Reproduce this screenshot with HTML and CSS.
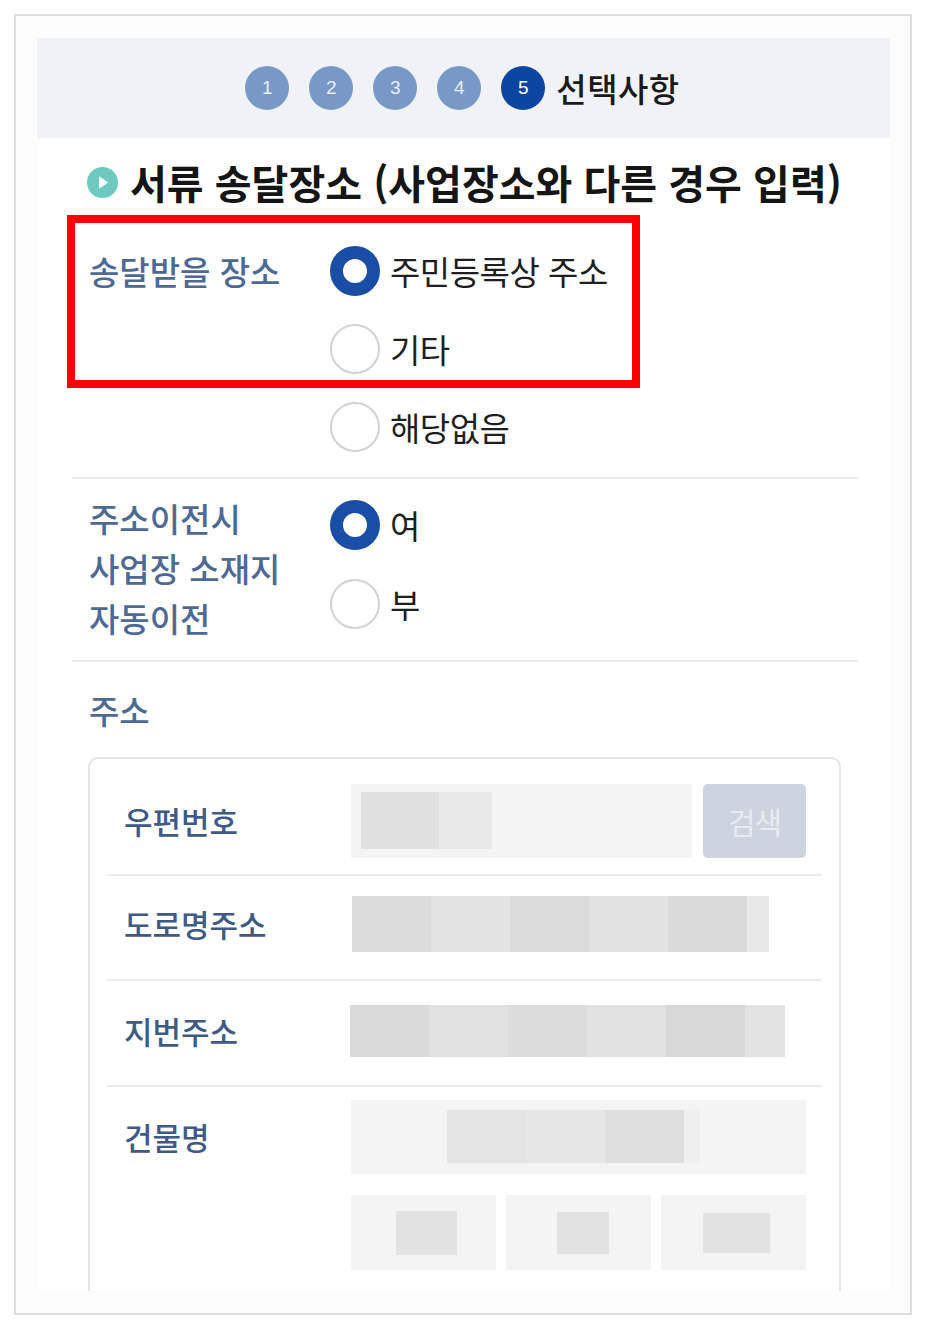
FILE: index.html
```html
<!DOCTYPE html>
<html lang="ko">
<head>
<meta charset="utf-8">
<link rel="stylesheet" href="styles.css">
</head>
<body>
<div class="frame">
  <div class="screen">
    <div class="steps">
      <span class="step">1</span>
      <span class="step">2</span>
      <span class="step">3</span>
      <span class="step">4</span>
      <span class="step step-active">5</span>
      <span class="step-name">선택사항</span>
    </div>
    <div class="content">
      <h2 class="title">
        <svg class="title-icon" viewBox="0 0 32 32" width="31" height="31"><circle cx="16" cy="16" r="16" fill="#6ec9c1"/><path d="M12.5 9.5 L22 16 L12.5 22.5 Z" fill="#fff"/></svg>
        <span>서류 송달장소 (사업장소와 다른 경우 입력)</span>
      </h2>

      <div class="field field-place">
        <div class="field-label">송달받을 장소</div>
        <div class="options">
          <label class="option"><span class="radio radio-on"></span><span class="option-text">주민등록상 주소</span></label>
          <label class="option"><span class="radio"></span><span class="option-text">기타</span></label>
          <label class="option"><span class="radio"></span><span class="option-text">해당없음</span></label>
        </div>
      </div>

      <div class="field field-move">
        <div class="field-label multi">주소이전시<br>사업장 소재지<br>자동이전</div>
        <div class="options options-move">
          <label class="option"><span class="radio radio-on"></span><span class="option-text">여</span></label>
          <label class="option"><span class="radio"></span><span class="option-text">부</span></label>
        </div>
      </div>

      <div class="field-addr">
        <div class="field-label">주소</div>
      </div>

      <div class="card">
        <div class="crow crow-zip">
          <div class="clabel">우편번호</div>
          <div class="zip">
            <div class="input zip-input"><span class="blk blk-a"></span><span class="blk blk-b"></span></div>
            <button class="btn-search">검색</button>
          </div>
        </div>
        <div class="crow crow-road">
          <div class="clabel">도로명주소</div>
          <div class="bar bar-road"></div>
        </div>
        <div class="crow crow-jibun">
          <div class="clabel">지번주소</div>
          <div class="bar bar-jibun"></div>
        </div>
        <div class="crow crow-bldg">
          <div class="clabel clabel-top">건물명</div>
          <div class="bldg">
            <div class="input bldg-input"><span class="bldg-blur"></span></div>
            <div class="boxes">
              <div class="box"><span class="sq sq-1"></span></div>
              <div class="box"><span class="sq sq-2"></span></div>
              <div class="box"><span class="sq sq-3"></span></div>
            </div>
          </div>
        </div>
      </div>

      <div class="highlight"></div>
    </div>
  </div>
</div>
</body>
</html>
```

FILE: styles.css
```css
* { box-sizing: border-box; }
html, body { margin: 0; padding: 0; background: #fff; }
body {
  font-family: "Noto Sans CJK KR", "Noto Sans", sans-serif;
  color: #1f1f1f;
}
.frame {
  margin: 14px 0 0 14px;
  width: 898px;
  height: 1301px;
  border: 2px solid #dcdcdc;
  background: #fcfcfd;
  padding: 22px 0 0 21px;
}
.screen {
  width: 853px;
  height: 1253px;
  overflow: hidden;
  background: #fff;
}
.steps {
  height: 100px;
  background: #f0f2f7;
  display: flex;
  align-items: center;
  justify-content: center;
  gap: 20px;
  padding-right: 2px;
}
.step {
  width: 44px;
  height: 44px;
  border-radius: 50%;
  background: #7898c6;
  color: #e9eef7;
  font-family: "Liberation Sans", sans-serif;
  font-size: 19px;
  display: flex;
  align-items: center;
  justify-content: center;
}
.step-active { background: #0b45a2; color: #fff; }
.step-name {
  margin-left: -9px;
  font-size: 33px;
  font-weight: 500;
  letter-spacing: 0.5px;
  color: #1a1a1a;
  line-height: 44px;
}
.content {
  position: relative;
  padding: 0 32px 0 35px;
}
.title {
  margin: 0;
  padding: 19px 0 0 15px;
  display: flex;
  align-items: center;
  gap: 12px;
  height: 69px;
  font-size: 40px;
  font-weight: 700;
  letter-spacing: 0;
  color: #151515;
  line-height: 50px;
}
.title-icon { flex: none; }
.field {
  display: grid;
  grid-template-columns: 258px 1fr;
  border-bottom: 2px solid #ececec;
}
.field-label {
  font-size: 33px;
  font-weight: 500;
  letter-spacing: 0;
  color: #4e6a94;
  line-height: 50px;
  padding-left: 17px;
}
.field-place { padding: 39px 0 25px; }
.field-move { padding: 14px 0 17px; }
.options { display: flex; flex-direction: column; gap: 28px; }
.options-move { padding-top: 7px; gap: 29px; }
.option { display: flex; align-items: center; gap: 10px; height: 50px; }
.radio {
  flex: none;
  width: 50px;
  height: 50px;
  border-radius: 50%;
  border: 2px solid #d2d2d2;
  background: #fff;
}
.radio-on { border: 13px solid #1a4da6; }
.option-text {
  font-size: 33px;
  letter-spacing: -0.5px;
  color: #1f1f1f;
  line-height: 50px;
}
.field-addr { padding-top: 23px; height: 95px; }
.card {
  margin: 0 17px 0 16px;
  border: 2px solid #e6e6e6;
  border-radius: 10px;
  padding: 0 17px;
  height: 620px;
}
.crow {
  display: grid;
  grid-template-columns: 244px 1fr;
  padding-right: 16px;
  align-items: center;
  border-bottom: 2px solid #ececec;
}
.crow-zip { padding-top: 25px; padding-bottom: 16px; }
.crow-road { padding-top: 20px; padding-bottom: 27px; }
.crow-jibun { padding-top: 24px; padding-bottom: 28px; }
.crow-bldg { padding-top: 13px; border-bottom: 0; align-items: start; }
.clabel {
  padding-left: 17px;
  font-size: 31px;
  font-weight: 500;
  letter-spacing: 0;
  color: #3f5a86;
  line-height: 50px;
}
.clabel-top { line-height: 74px; }
.zip { display: flex; gap: 11px; }
.input { background: #f4f4f4; height: 74px; }
.zip-input { width: 341px; display: flex; padding: 8px 0 9px 10px; }
.blk { display: block; height: 57px; }
.blk-a { width: 78px; background: #e0e0e0; }
.blk-b { width: 53px; background: #e9e9e9; }
.btn-search {
  width: 103px;
  height: 74px;
  border: 0;
  border-radius: 5px;
  background: #cdd3df;
  color: #e8ebf2;
  font-family: inherit;
  font-size: 30px;
  letter-spacing: -1px;
  padding: 0;
}
.bar { height: 56px; }
.bar-road {
  width: 417px;
  margin-left: 1px;
  background: linear-gradient(to right,
    #dcdcdc 0 79px, #e3e3e3 79px 158px, #dbdbdb 158px 237px,
    #e2e2e2 237px 316px, #dadada 316px 395px, #e8e8e8 395px 417px);
}
.bar-jibun {
  height: 52px;
  width: 435px;
  margin-left: -1px;
  background: linear-gradient(to right,
    #dadada 0 79px, #e1e1e1 79px 158px, #dcdcdc 158px 237px,
    #e2e2e2 237px 316px, #d8d8d8 316px 395px, #e3e3e3 395px 435px);
}
.bldg { display: flex; flex-direction: column; gap: 21px; }
.bldg-input { display: flex; padding: 10px 0 11px 96px; }
.bldg-blur {
  display: block;
  width: 253px;
  height: 53px;
  background: linear-gradient(to right,
    #e4e4e4 0 79px, #e6e6e6 79px 158px, #dedede 158px 237px, #efefef 237px 253px);
}
.boxes { display: grid; grid-template-columns: repeat(3, 1fr); gap: 10px; }
.box {
  height: 75px;
  background: #f4f4f4;
  display: flex;
  align-items: center;
}
.sq { display: block; background: #e2e2e2; }
.sq-1 { width: 61px; height: 44px; margin-left: 45px; }
.sq-2 { width: 52px; height: 42px; margin-left: 51px; }
.sq-3 { width: 67px; height: 40px; margin-left: 42px; }
.highlight {
  position: absolute;
  left: 30px;
  top: 77px;
  width: 573px;
  height: 173px;
  border: 8px solid #ff0000;
  pointer-events: none;
}
```
